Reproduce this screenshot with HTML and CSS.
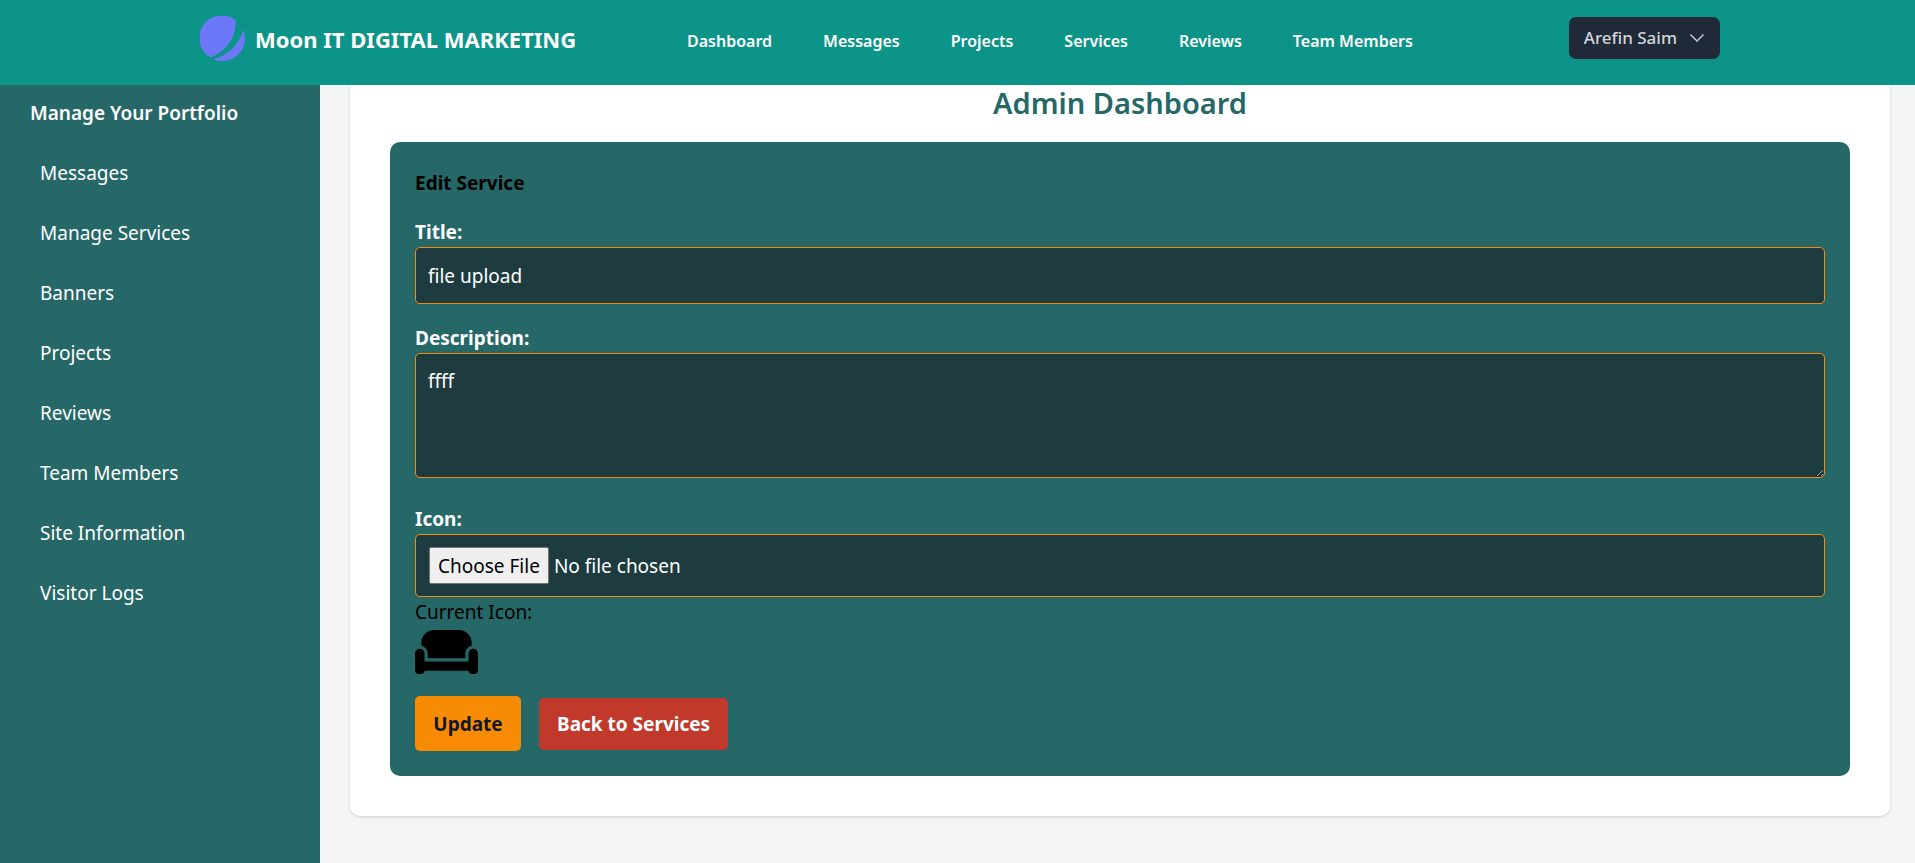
FILE: index.html
```html
<!DOCTYPE html>
<html lang="en">
<head>
<meta charset="utf-8">
<title>Admin Dashboard</title>
<link rel="stylesheet" href="styles.css">
</head>
<body>
<header class="topbar">
  <a class="brand" href="#">
    <svg class="brand-logo" viewBox="0 0 45 45" aria-hidden="true">
      <path d="M35.500 4.200C36.500 21 27 35 10.500 41.500A22.500 22.500 0 1 1 35.500 4.200Z"/>
      <path d="M43.200 13.800A22.500 22.500 0 0 1 13.500 43.200C28 39.500 39.500 28.500 43.200 13.800Z"/>
    </svg>
    <span>Moon IT DIGITAL MARKETING</span>
  </a>
  <nav class="topnav">
    <a href="#">Dashboard</a>
    <a href="#">Messages</a>
    <a href="#">Projects</a>
    <a href="#">Services</a>
    <a href="#">Reviews</a>
    <a href="#">Team Members</a>
  </nav>
  <button class="user-menu" type="button">
    <span>Arefin Saim</span>
    <svg class="chevron" viewBox="0 0 16 16" aria-hidden="true"><path d="M1.500 4.500 8 11l6.500-6.500"/></svg>
  </button>
</header>
<div class="layout">
  <aside class="sidebar">
    <h2 class="sidebar-title">Manage Your Portfolio</h2>
    <nav class="sidenav">
      <a href="#">Messages</a>
      <a href="#">Manage Services</a>
      <a href="#">Banners</a>
      <a href="#">Projects</a>
      <a href="#">Reviews</a>
      <a href="#">Team Members</a>
      <a href="#">Site Information</a>
      <a href="#">Visitor Logs</a>
    </nav>
  </aside>
  <main class="content">
    <section class="card">
      <h1 class="page-title">Admin Dashboard</h1>
      <form class="panel">
        <h2 class="panel-title">Edit Service</h2>
        <div class="field">
          <label for="title">Title:</label>
          <input class="control text" id="title" type="text" value="file upload">
        </div>
        <div class="field field-area">
          <label for="description">Description:</label>
          <textarea class="control area" id="description">ffff</textarea>
        </div>
        <div class="field">
          <label for="icon">Icon:</label>
          <input class="control file" id="icon" type="file">
          <p class="current">Current Icon:</p>
          <svg class="couch" viewBox="0 32 640 448" role="img" aria-label="Couch"><path d="M64 160C64 89.300 121.300 32 192 32l256 0c70.700 0 128 57.300 128 128l0 33.600c-36.500 7.400-64 39.700-64 78.400l0 48-384 0 0-48c0-38.700-27.500-71-64-78.400L64 160zM544 272c0-20.900 13.400-38.700 32-45.300c5-1.800 10.400-2.700 16-2.700c26.500 0 48 21.500 48 48l0 176c0 17.700-14.300 32-32 32l-32 0c-17.700 0-32-14.300-32-32L96 448c0 17.700-14.300 32-32 32l-32 0c-17.700 0-32-14.300-32-32L0 272c0-26.500 21.500-48 48-48c5.600 0 11 1 16 2.700c18.600 6.600 32 24.400 32 45.300l0 48 0 32 32 0 384 0 32 0 0-32 0-48z"/></svg>
        </div>
        <div class="actions">
          <button class="btn btn-update" type="submit">Update</button>
          <a class="btn btn-back" href="#">Back to Services</a>
        </div>
      </form>
    </section>
  </main>
</div>
</body>
</html>
```

FILE: styles.css
```css
* { box-sizing: border-box; }

body {
  margin: 0;
  min-height: 100vh;
  display: flex;
  flex-direction: column;
  background: #f3f4f6;
  color: #000;
  font: 19px/30px "Segoe UI", "Noto Sans", sans-serif;
}

h1, h2, p { margin: 0; }
a { color: inherit; text-decoration: none; }
button, input, textarea { font: inherit; }

.topbar {
  display: grid;
  grid-template-columns: 487px auto 1fr;
  align-items: start;
  padding: 16px 195px 24px 200px;
  background: #0d9488;
  color: #fff;
}

.brand {
  display: flex;
  align-items: center;
  gap: 10px;
  font-size: 22px;
  font-weight: 700;
}
.brand-logo { width: 45px; height: 45px; fill: #6c78f8; }

.topnav {
  display: flex;
  gap: 51px;
  padding-top: 10px;
  font-size: 16px;
  font-weight: 600;
}

.user-menu {
  justify-self: end;
  display: flex;
  align-items: center;
  gap: 12px;
  height: 42px;
  margin-top: 1px;
  padding: 0 15px;
  border: 0;
  border-radius: 7px;
  background: #1f2937;
  color: #d1d5db;
  font-size: 17px;
  font-weight: 500;
}
.chevron { width: 16px; height: 16px; fill: none; stroke: currentColor; stroke-width: 1.3; }

.layout { flex: 1; display: flex; }

.sidebar {
  width: 320px;
  flex: none;
  padding: 13px 30px;
  background: #266867;
  color: #fff;
}
.sidebar-title { font-size: 19px; font-weight: 600; line-height: 30px; }
.sidenav { display: flex; flex-direction: column; gap: 30px; padding: 30px 10px; }

.content { flex: 1; padding: 0 25px 47px 30px; }

.card {
  padding: 0 40px 40px;
  border-radius: 0 0 10px 10px;
  background: #fff;
  box-shadow: 0 1px 3px rgba(0, 0, 0, .15);
}
.page-title {
  padding-bottom: 21px;
  color: #266867;
  font-size: 29px;
  font-weight: 600;
  line-height: 36px;
  text-align: center;
}

.panel {
  display: flex;
  flex-direction: column;
  padding: 26px 25px 25px;
  border-radius: 10px;
  background: #266867;
}
.panel-title { font-size: 19px; font-weight: 700; line-height: 30px; margin-bottom: 20px; }
.field { display: flex; flex-direction: column; margin-bottom: 20px; }
.field-area { margin-bottom: 27px; }
.field label { color: #fff; font-weight: 700; line-height: 29px; }

.control {
  width: 100%;
  padding: 12px;
  border: 1px solid #f78b04;
  border-radius: 5px;
  outline: 0;
  background: #1e3c3f;
  color: #fff;
}
.text { height: 57px; }
.area { height: 125px; resize: vertical; }
.file { height: 63px; padding: 12px 13px; }
.file::file-selector-button {
  height: 37px;
  margin: 0 5px 0 0;
  padding: 1px 8px;
  border: 1px solid #767676;
  border-radius: 2px;
  background: #efefef;
  color: #000;
  font: inherit;
}
.couch { width: 63px; height: 44px; margin-top: 3px; }

.actions { display: flex; align-items: center; gap: 18px; padding-top: 2px; }
.btn {
  padding: 11px 18px;
  border: 0;
  border-radius: 5px;
  font-weight: 700;
}
.btn-update { min-width: 106px; padding: 13px 18px 12px; background: #f78b04; color: #111827; }
.btn-back { background: #c0392b; color: #fff; }
```
